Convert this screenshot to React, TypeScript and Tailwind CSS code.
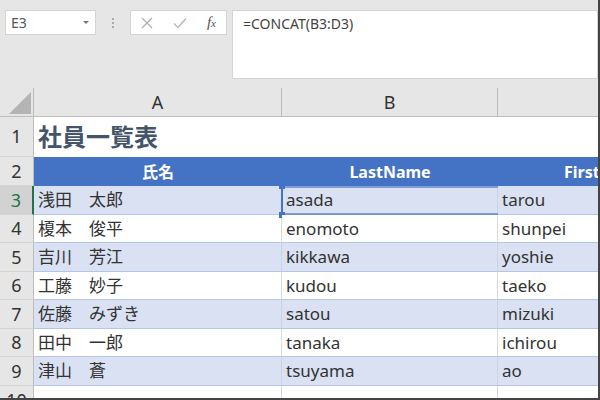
import type { ReactNode } from "react";

const rows: [string, string, string][] = [
  ["浅田　太郎", "asada", "tarou"],
  ["榎本　俊平", "enomoto", "shunpei"],
  ["吉川　芳江", "kikkawa", "yoshie"],
  ["工藤　妙子", "kudou", "taeko"],
  ["佐藤　みずき", "satou", "mizuki"],
  ["田中　一郎", "tanaka", "ichirou"],
  ["津山　蒼", "tsuyama", "ao"],
];

const font = "font-['Noto_Sans','Noto_Sans_CJK_JP',sans-serif]";

function RowHead({ n, active, h }: { n: number; active?: boolean; h: string }) {
  return (
    <div
      className={`${h} flex items-center justify-center border-b border-[#d4d4d4] text-[18px] ${
        active
          ? "bg-[#d2d2d2] text-[#217346] border-r-2 border-r-[#217346]"
          : "bg-[#e6e6e6] text-[#333] border-r border-r-[#bdbdbd]"
      }`}
    >
      {n}
    </div>
  );
}

function Cell({ children, band, last, h }: { children?: ReactNode; band: boolean; last?: boolean; h: string }) {
  return (
    <div
      className={`${h} flex items-center overflow-hidden whitespace-nowrap border-b border-[#b4c6e7] pl-1 text-[17px] text-[#333] ${
        band ? "bg-[#d9e1f2]" : "bg-white"
      } ${last ? "" : band ? "border-r border-r-[#c9d3e6]" : "border-r border-r-[#dadada]"}`}
    >
      {children}
    </div>
  );
}

export default function App() {
  return (
    <div className={`${font} h-[400px] w-[600px] overflow-hidden border-b-2 border-r-2 border-[#444] bg-[#e6e6e6]`}>
      {/* formula bar */}
      <div className="flex h-[88px] gap-[5px] pl-[5px] pt-[10px]">
        <div className="flex h-[25px] w-[91px] items-center justify-between border border-[#d4d4d4] bg-white pl-[5px] pr-[6px] text-[14px] text-[#555]">
          <span>E3</span>
          <span className="h-0 w-0 border-x-[3px] border-t-[3px] border-x-transparent border-t-[#777]" />
        </div>
        <div className="flex h-[25px] w-[24px] flex-col items-center justify-center gap-[2px]">
          <span className="h-[2px] w-[2px] bg-[#aaa]" />
          <span className="h-[2px] w-[2px] bg-[#aaa]" />
          <span className="h-[2px] w-[2px] bg-[#aaa]" />
        </div>
        <div className="flex h-[25px] w-[97px] items-center justify-between border border-[#d4d4d4] bg-white px-[10px]">
          <svg width="12" height="12" viewBox="0 0 12 12">
            <path d="M1 1L11 11M11 1L1 11" stroke="#b0b0b0" strokeWidth="1.3" fill="none" />
          </svg>
          <svg width="14" height="12" viewBox="0 0 14 12">
            <path d="M1 6.5L5 10.5L13 1.5" stroke="#b8b8b8" strokeWidth="1.4" fill="none" />
          </svg>
          <span className="font-['Liberation_Serif',serif] text-[15px] italic text-[#555]">
            f<span className="text-[11px]">x</span>
          </span>
        </div>
        <div className="h-[69px] flex-1 border border-[#d4d4d4] bg-white pl-[10px] pt-[2px] text-[14px] text-[#444]">
          =CONCAT(B3:D3)
        </div>
      </div>

      {/* sheet */}
      <div className="grid grid-cols-[34px_248px_216px_1fr] bg-white">
        {/* column headers */}
        <div className="relative h-[29px] border-b border-r border-[#bdbdbd] bg-[#e6e6e6]">
          <span className="absolute bottom-[2px] right-[2px] h-0 w-0 border-b-[22px] border-l-[22px] border-b-[#b4b4b4] border-l-transparent" />
        </div>
        <div className="flex h-[29px] items-center justify-center border-b border-r border-[#bdbdbd] bg-[#e6e6e6] text-[18px] text-[#333]">A</div>
        <div className="flex h-[29px] items-center justify-center border-b border-r border-[#bdbdbd] bg-[#e6e6e6] text-[18px] text-[#333]">B</div>
        <div className="h-[29px] border-b border-[#bdbdbd] bg-[#e6e6e6]" />

        {/* row 1 */}
        <RowHead n={1} h="h-[40px]" />
        <div className="col-span-3 flex h-[40px] items-center pl-1 text-[24px] font-bold text-[#44546a]">社員一覧表</div>

        {/* row 2 */}
        <RowHead n={2} h="h-[29px]" />
        <div className="flex h-[29px] items-center justify-center bg-[#4472c4] text-[16px] font-bold text-white">氏名</div>
        <div className="flex h-[29px] items-center justify-center bg-[#4472c4] text-[16px] font-bold text-white">LastName</div>
        <div className="flex h-[29px] items-center bg-[#4472c4] pl-[66px] text-[16px] font-bold text-white">FirstName</div>

        {rows.map((r, i) => {
          const band = i % 2 === 0;
          const h = i % 2 === 0 ? "h-[29px]" : "h-[28px]";
          return (
            <div key={i} className="contents">
              <RowHead n={i + 3} active={i === 0} h={h} />
              <Cell band={band} h={h}>{r[0]}</Cell>
              <div className="relative">
                <Cell band={band} h={h}>{r[1]}</Cell>
                {i === 0 && (
                  <>
                    <span className="absolute -left-px top-0 h-full w-[2px] bg-[#4472c4]" />
                    <span className="absolute left-0 top-0 h-[2px] w-full bg-[#4472c4]/60" />
                    <span className="absolute bottom-0 left-0 h-[2px] w-full bg-[#4472c4]/60" />
                    <span className="absolute -left-[3px] -top-[3px] h-[6px] w-[6px] bg-[#4472c4]" />
                    <span className="absolute -bottom-[3px] -left-[3px] h-[6px] w-[6px] bg-[#4472c4]" />
                  </>
                )}
              </div>
              <Cell band={band} h={h} last>{r[2]}</Cell>
            </div>
          );
        })}

        {/* row 10 */}
        <RowHead n={10} h="h-[29px]" />
        <div className="h-[29px] border-r border-[#dadada]" />
        <div className="h-[29px] border-r border-[#dadada]" />
        <div className="h-[29px]" />
      </div>
    </div>
  );
}
